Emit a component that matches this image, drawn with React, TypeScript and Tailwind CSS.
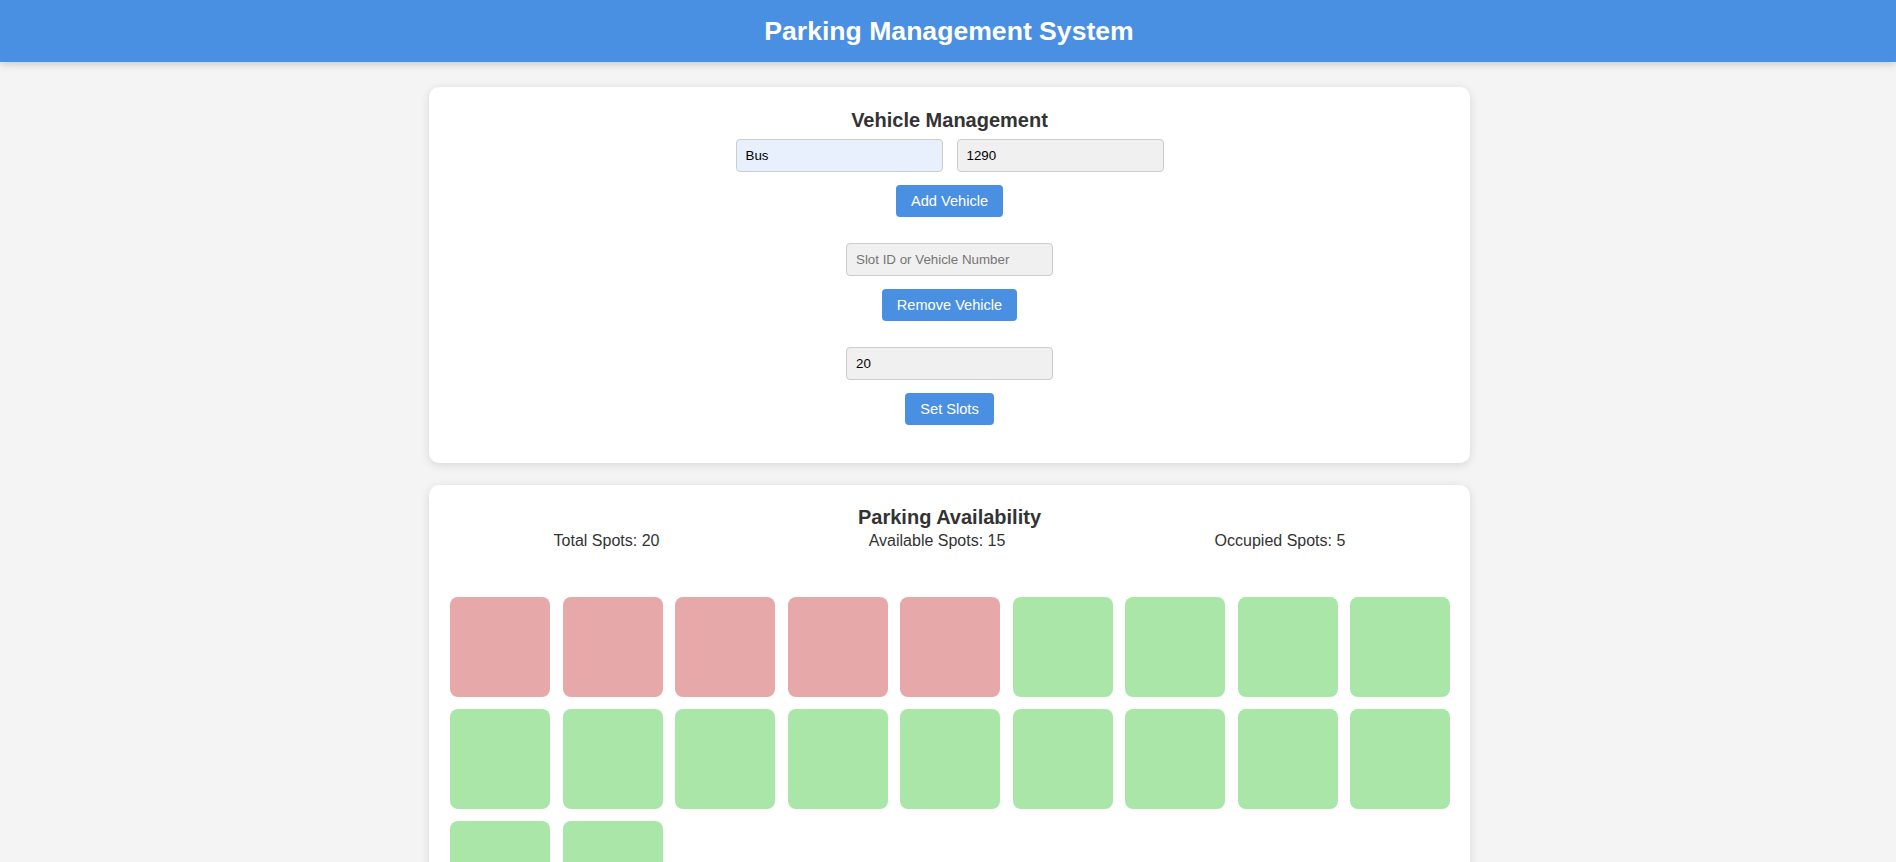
import React from "react";

const inputBase =
  "w-[207px] h-[33px] px-[9px] border border-[#cccccc] rounded-[4px] text-[13.333px] leading-[15px] text-black outline-none placeholder:text-[#757575] font-['Liberation_Sans',Arial,sans-serif]";

const btn =
  "h-[32px] px-[15px] rounded-[4px] bg-[#4a90e2] text-white text-[14.6px] leading-[16px] font-['Liberation_Sans',Arial,sans-serif]";

export default function App() {
  const occupied = 5;
  const total = 20;
  const spots = Array.from({ length: total }, (_, i) => i < occupied);

  return (
    <div className="h-screen overflow-hidden bg-[#f4f4f4] font-['Liberation_Sans',Arial,sans-serif] text-[#333333]">
      <header className="h-[62px] bg-[#4a90e2] flex items-center justify-center pl-[2px] shadow-[0_2px_8px_rgba(0,0,0,0.18)] relative z-10">
        <h1 className="text-white text-[26.6px] font-bold leading-[31px]">Parking Management System</h1>
      </header>

      <main className="flex flex-col items-center pl-[3px]">
        <section className="mt-[25px] w-[1041px] bg-white rounded-[10px] shadow-[0_2px_10px_rgba(0,0,0,0.12)] px-5 pt-[22px] pb-[38px] flex flex-col items-center">
          <h2 className="text-[20px] font-bold leading-[23px] text-[#333333]">Vehicle Management</h2>

          <div className="mt-[7px] flex flex-col items-center">
            <div className="flex gap-[14px]">
              <input className={`${inputBase} bg-[#e8f0fe]`} defaultValue="Bus" />
              <input className={`${inputBase} bg-[#f0f0f0]`} defaultValue="1290" />
            </div>
            <button className={`${btn} mt-[13px]`}>Add Vehicle</button>
          </div>

          <div className="mt-[26px] flex flex-col items-center">
            <input className={`${inputBase} bg-[#f0f0f0]`} placeholder="Slot ID or Vehicle Number" />
            <button className={`${btn} mt-[13px]`}>Remove Vehicle</button>
          </div>

          <div className="mt-[26px] flex flex-col items-center">
            <input className={`${inputBase} bg-[#f0f0f0]`} defaultValue="20" />
            <button className={`${btn} mt-[13px]`}>Set Slots</button>
          </div>
        </section>

        <section className="mt-[22px] w-[1041px] bg-white rounded-[10px] shadow-[0_2px_10px_rgba(0,0,0,0.12)] px-5 pt-[21px] pb-5">
          <h2 className="text-center text-[20px] font-bold leading-[23px] text-[#333333]">Parking Availability</h2>
          <div className="mt-[3px] flex justify-around text-[16px] leading-[18px] text-[#333333]">
            <span>Total Spots: {total}</span>
            <span>Available Spots: {total - occupied}</span>
            <span>Occupied Spots: {occupied}</span>
          </div>

          <div className="mt-[47px] grid grid-cols-[repeat(9,100px)] justify-between gap-y-3 pl-px">
            {spots.map((occ, i) => (
              <div
                key={i}
                className={`w-[100px] h-[100px] rounded-[8px] ${occ ? "bg-[#e7a8a9]" : "bg-[#a9e6a7]"}`}
              />
            ))}
          </div>
        </section>
      </main>
    </div>
  );
}
